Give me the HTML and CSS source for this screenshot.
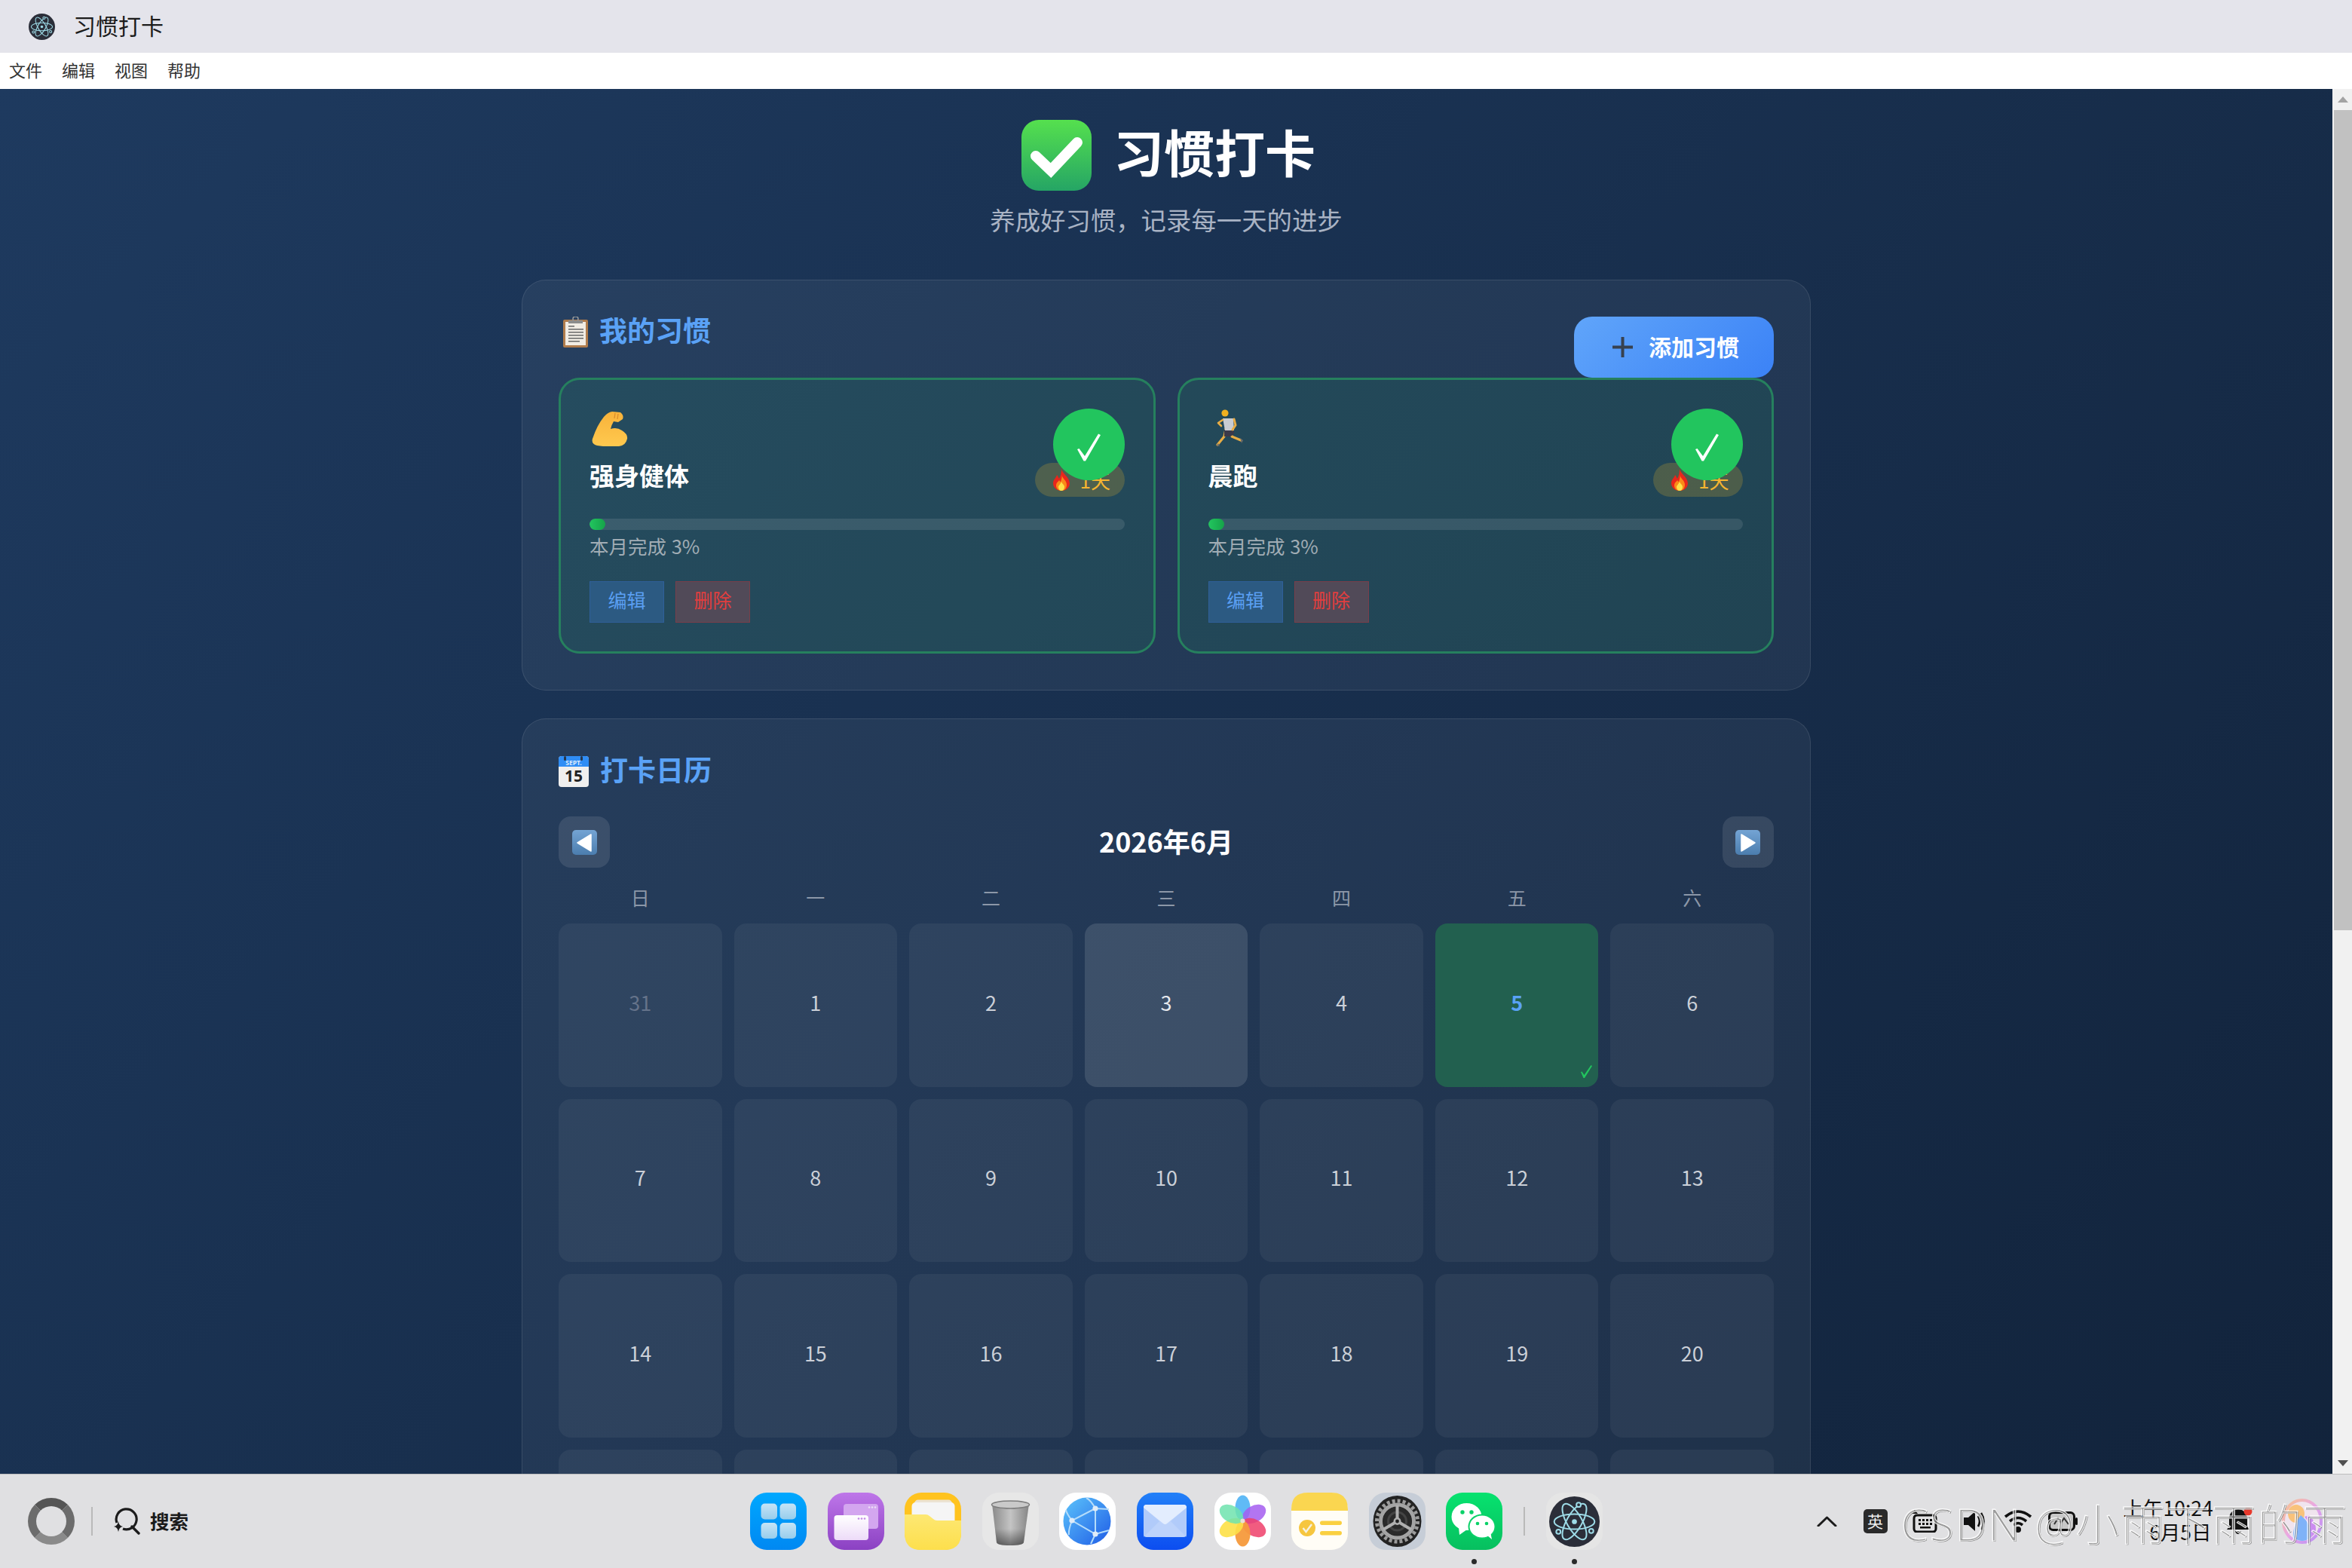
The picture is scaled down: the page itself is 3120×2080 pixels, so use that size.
FILE: index.html
```html
<!DOCTYPE html>
<html lang="zh-CN">
<head>
<meta charset="utf-8">
<title>习惯打卡</title>
<link rel="stylesheet" href="styles.css">
</head>
<body>
<svg class="defs" aria-hidden="true">
  <defs>
    <linearGradient id="gCheck" x1="0" y1="0" x2="0" y2="1"><stop offset="0" stop-color="#55e04e"/><stop offset="1" stop-color="#25a565"/></linearGradient>
    <linearGradient id="gArm" x1="0" y1="0" x2="0" y2="1"><stop offset="0" stop-color="#f8b23a"/><stop offset="1" stop-color="#ffc94f"/></linearGradient>
    <linearGradient id="gNav" x1="0" y1="0" x2="0" y2="1"><stop offset="0" stop-color="#74a4d4"/><stop offset="1" stop-color="#4b7dae"/></linearGradient>
    <linearGradient id="gBlue" x1="0" y1="0" x2="0" y2="1"><stop offset="0" stop-color="#00a8ff"/><stop offset="1" stop-color="#0088f2"/></linearGradient>
    <linearGradient id="gTile" x1="0" y1="0" x2="0" y2="1"><stop offset="0" stop-color="#c6e4f6"/><stop offset="1" stop-color="#97cdec"/></linearGradient>
    <linearGradient id="gPurple" x1="0" y1="0" x2="0" y2="1"><stop offset="0" stop-color="#be76e9"/><stop offset="1" stop-color="#8b41c3"/></linearGradient>
    <linearGradient id="gWin" x1="0" y1="0" x2="0" y2="1"><stop offset="0" stop-color="#ffffff"/><stop offset="1" stop-color="#eddbf8"/></linearGradient>
    <linearGradient id="gFolder" x1="0" y1="0" x2="0" y2="1"><stop offset="0" stop-color="#fde873"/><stop offset="1" stop-color="#fddf4c"/></linearGradient>
    <linearGradient id="gBin" x1="0" y1="0" x2="1" y2="0"><stop offset="0" stop-color="#8a8a8a"/><stop offset=".5" stop-color="#c4c4c4"/><stop offset="1" stop-color="#858585"/></linearGradient>
    <linearGradient id="gBinV" x1="0" y1="0" x2="0" y2="1"><stop offset=".6" stop-color="#000" stop-opacity="0"/><stop offset="1" stop-color="#000" stop-opacity=".45"/></linearGradient>
    <linearGradient id="gGlobe" x1="0" y1="0" x2="1" y2="1"><stop offset="0" stop-color="#5cc4fb"/><stop offset="1" stop-color="#1f5ce6"/></linearGradient>
    <linearGradient id="gMail" x1="0" y1="0" x2="0" y2="1"><stop offset="0" stop-color="#2280f8"/><stop offset="1" stop-color="#0c4df0"/></linearGradient>
    <linearGradient id="gGreen" x1="0" y1="0" x2="0" y2="1"><stop offset="0" stop-color="#07e26f"/><stop offset="1" stop-color="#07bf5f"/></linearGradient>
    <linearGradient id="gOrb" x1="0" y1="0" x2="1" y2="1"><stop offset="0" stop-color="#f8c48a"/><stop offset=".5" stop-color="#e8a6e8"/><stop offset="1" stop-color="#b78bf5"/></linearGradient>

    <symbol id="atom" viewBox="0 0 60 60">
      <circle cx="30" cy="30" r="30" fill="#2b2e39"/>
      <g fill="none" stroke="#9edce8" stroke-width="1.800">
        <ellipse cx="30" cy="30" rx="24" ry="9"/>
        <ellipse cx="30" cy="30" rx="24" ry="9" transform="rotate(60 30 30)"/>
        <ellipse cx="30" cy="30" rx="24" ry="9" transform="rotate(120 30 30)"/>
      </g>
      <circle cx="30" cy="30" r="3" fill="#9edce8"/>
      <g fill="#2b2e39" stroke="#9edce8" stroke-width="1.800">
        <circle cx="35" cy="10" r="2.600"/><circle cx="11" cy="42" r="2.600"/><circle cx="50" cy="41" r="2.600"/>
      </g>
    </symbol>
    <symbol id="fire" viewBox="0 0 24 29">
      <path d="M12 0C13 6 22 10 23 19C23 25 18 29 12 29C6 29 1 25 1 19C1 14 5 12 6 8C8 10 8 12 9 13C11 9 12 5 12 0Z" fill="#e8261c"/>
      <path d="M12.500 8C13 13 19 15 19 21C19 26 16 29 12 29C8 29 5 26 5 22C5 18 8 17 9 15C10 16 10 17 11 17C12 14 13 11 12.500 8Z" fill="#fa8a18"/>
      <path d="M12 17C13 20 16 21 16 24C16 27 14 29 12 29C10 29 8 27 8 24C8 22 11 20 12 17Z" fill="#fde24a"/>
    </symbol>
    <symbol id="tick" viewBox="0 0 95 95">
      <path d="M32 54L34.500 53L42 63L60 33.500L63 35L43 69.500L40.500 69.500Z" fill="#fff"/>
    </symbol>
  </defs>
</svg>

<div class="window">
  <header class="titlebar">
    <svg class="title-icon" viewBox="0 0 60 60"><use href="#atom"/></svg>
    <span class="title-text">习惯打卡</span>
  </header>
  <nav class="menubar">
    <span>文件</span><span>编辑</span><span>视图</span><span>帮助</span>
  </nav>

  <div class="main">
    <div class="viewport">
      <div class="page">
        <div class="hero">
          <div class="hero-row">
            <svg class="hero-icon" viewBox="0 0 93 94">
              <rect width="93" height="94" rx="23" fill="url(#gCheck)"/>
              <path d="M19 48L39 67L74 30" fill="none" stroke="#fff" stroke-width="14" stroke-linecap="round" stroke-linejoin="miter"/>
            </svg>
            <h1 class="hero-title">习惯打卡</h1>
          </div>
          <p class="hero-sub">养成好习惯，记录每一天的进步</p>
        </div>

        <section class="panel panel-habits">
          <div class="panel-head">
            <h2 class="panel-title">
              <svg class="emoji-clip" viewBox="0 0 33 41">
                <rect x="0" y="4" width="33" height="37" rx="2" fill="#b07c4c"/>
                <rect x="3" y="7" width="27" height="31" fill="#f1ece4"/>
                <rect x="13" y="0" width="7" height="6" rx="3" fill="none" stroke="#9a9a9a" stroke-width="1.500"/>
                <rect x="7" y="5" width="19" height="4" fill="#8c8c8c"/>
                <g fill="#666"><rect x="7" y="12" width="8" height="1.500"/><rect x="7" y="16" width="20" height="1.500"/><rect x="7" y="20" width="20" height="1.500"/><rect x="7" y="24" width="20" height="1.500"/><rect x="7" y="28" width="20" height="1.500"/><rect x="7" y="32" width="15" height="1.500"/></g>
              </svg>
              <span class="panel-title-text">我的习惯</span>
            </h2>
            <button class="add-btn">
              <svg class="plus" viewBox="0 0 27 27"><path d="M11.500 0h4v11.500H27v4H15.500V27h-4V15.500H0v-4h11.500z" fill="#37414f"/></svg>
              <span class="add-text">添加习惯</span>
            </button>
          </div>
          <div class="habits">
            <article class="habit">
              <div class="done-badge"><svg class="tick" viewBox="0 0 95 95"><use href="#tick"/></svg></div>
              <div class="habit-top">
                <div class="habit-id">
                  <div class="habit-emoji">
                    <svg class="emoji-arm" viewBox="0 0 48 46">
                      <path d="M27 0L38 1Q43 5 41 10L35 14L29 13Q26 18 25 23Q33 20 40 25Q48 30 47 36Q45 45 36 46Q18 47 7 45Q-1 43 1 36Q7 18 16 7Q21 1 27 0Z" fill="url(#gArm)"/>
                      <path d="M31 2l-1 7M35 3l-1 7" stroke="#d98a2b" stroke-width="1.200"/>
                    </svg>
                  </div>
                  <div class="habit-name">强身健体</div>
                </div>
                <div class="streak"><svg class="fire" viewBox="0 0 24 29"><use href="#fire"/></svg><span>1天</span></div>
              </div>
              <div class="bar"><div class="bar-fill"></div></div>
              <div class="bar-text">本月完成 3%</div>
              <div class="actions"><button class="btn-edit">编辑</button><button class="btn-del">删除</button></div>
            </article>

            <article class="habit">
              <div class="done-badge"><svg class="tick" viewBox="0 0 95 95"><use href="#tick"/></svg></div>
              <div class="habit-top">
                <div class="habit-id">
                  <div class="habit-emoji runner-wrap">
                    <svg class="emoji-run" viewBox="0 0 41 50">
                      <path d="M16 26L14 36L5 47" fill="none" stroke="#e8ad45" stroke-width="3.200" stroke-linecap="round" stroke-linejoin="round"/>
                      <path d="M22 26L24 36L36 41" fill="none" stroke="#e8ad45" stroke-width="3.200" stroke-linecap="round" stroke-linejoin="round"/>
                      <path d="M4 48l4 1-2-4zM35 38l4 3-2 4z" fill="#6b6b6b"/>
                      <path d="M14 27L27 27L27 33L22 36L14 36Z" fill="#3a3a4a"/>
                      <path d="M12 12L26 12L27 28L15 28Z" fill="#c9ccd2"/>
                      <path d="M12 14L6 18L10 22" fill="none" stroke="#e8ad45" stroke-width="2.600" stroke-linecap="round" stroke-linejoin="round"/>
                      <path d="M27 13L29 21L25 27" fill="none" stroke="#e8ad45" stroke-width="3" stroke-linecap="round" stroke-linejoin="round"/>
                      <circle cx="15" cy="5" r="4.600" fill="#f0b020"/>
                    </svg>
                  </div>
                  <div class="habit-name">晨跑</div>
                </div>
                <div class="streak"><svg class="fire" viewBox="0 0 24 29"><use href="#fire"/></svg><span>1天</span></div>
              </div>
              <div class="bar"><div class="bar-fill"></div></div>
              <div class="bar-text">本月完成 3%</div>
              <div class="actions"><button class="btn-edit">编辑</button><button class="btn-del">删除</button></div>
            </article>
          </div>
        </section>

        <section class="panel">
          <h2 class="panel-title cal-title">
            <svg class="emoji-cal" viewBox="0 0 40 41">
              <rect width="40" height="41" rx="4" fill="#f0efee"/>
              <path d="M0 14V4a4 4 0 0 1 4-4h32a4 4 0 0 1 4 4v10z" fill="#2f8df5"/>
              <rect x="7" y="0" width="3" height="6" rx="1.500" fill="#27364a"/><rect x="29" y="0" width="3" height="6" rx="1.500" fill="#27364a"/>
              <text x="20" y="12" text-anchor="middle" class="cal-mon">SEPT.</text>
              <text x="20" y="33.500" text-anchor="middle" class="cal-day">15</text>
            </svg>
            <span class="panel-title-text">打卡日历</span>
          </h2>
          <div class="month-row">
            <button class="nav-btn">
              <svg class="nav-arrow" viewBox="0 0 33 33"><rect width="33" height="33" rx="5" fill="url(#gNav)"/><path d="M7 17L25 6V28Z" fill="#fff" stroke="#fff" stroke-linejoin="round" stroke-width="1.500"/></svg>
            </button>
            <div class="month-name">2026年6月</div>
            <button class="nav-btn">
              <svg class="nav-arrow" viewBox="0 0 33 33"><rect width="33" height="33" rx="5" fill="url(#gNav)"/><path d="M26 17L8 6V28Z" fill="#fff" stroke="#fff" stroke-linejoin="round" stroke-width="1.500"/></svg>
            </button>
          </div>
          <div class="week"><span>日</span><span>一</span><span>二</span><span>三</span><span>四</span><span>五</span><span>六</span></div>
          <div class="cal-grid">
            <div class="day other">31</div><div class="day">1</div><div class="day">2</div><div class="day today">3</div><div class="day">4</div>
            <div class="day checked">5<svg class="day-tick" viewBox="0 0 15 17"><path d="M0 9L1.500 8.500L4.500 13L13.500 0L15 1L5 17L3.500 17Z" fill="#22c55e"/></svg></div><div class="day">6</div>
            <div class="day">7</div><div class="day">8</div><div class="day">9</div><div class="day">10</div><div class="day">11</div><div class="day">12</div><div class="day">13</div>
            <div class="day">14</div><div class="day">15</div><div class="day">16</div><div class="day">17</div><div class="day">18</div><div class="day">19</div><div class="day">20</div>
            <div class="day"></div><div class="day"></div><div class="day"></div><div class="day"></div><div class="day"></div><div class="day"></div><div class="day"></div>
          </div>
        </section>
      </div>
    </div>
    <aside class="scrollbar">
      <div class="sb-btn"><svg class="sb-arrow" viewBox="0 0 14 8"><path d="M7 0L14 8H0Z" fill="#a3a3a3"/></svg></div>
      <div class="sb-track"><div class="sb-thumb"></div></div>
      <div class="sb-btn"><svg class="sb-arrow" viewBox="0 0 14 8"><path d="M7 8L14 0H0Z" fill="#505050"/></svg></div>
    </aside>
  </div>

  <footer class="taskbar">
    <div class="start-ring"></div>
    <div class="tb-sep"></div>
    <svg class="search-icon" viewBox="0 0 36 36">
      <path d="M5 20A13.500 13.500 0 1 1 13 28" fill="none" stroke="#1c1c1c" stroke-width="3.200"/>
      <path d="M25 25L34 34" stroke="#1c1c1c" stroke-width="3.400" stroke-linecap="round"/>
      <path d="M7 18Q7.800 24 13 25Q7.800 26 7 32Q6.200 26 1 25Q6.200 24 7 18Z" fill="#1c1c1c"/>
    </svg>
    <span class="search-text">搜索</span>

    <div class="dock">
      <div class="dock-item"><svg class="dock-icon" viewBox="0 0 75 76">
        <rect width="75" height="76" rx="22" fill="url(#gBlue)"/>
        <rect x="14.500" y="14.500" width="21.500" height="21" rx="5" fill="url(#gTile)"/><rect x="39.500" y="14.500" width="21.500" height="21" rx="5" fill="url(#gTile)"/>
        <rect x="14.500" y="40" width="21.500" height="21" rx="5" fill="url(#gTile)"/><rect x="39.500" y="40" width="21.500" height="21" rx="5" fill="url(#gTile)"/>
      </svg></div>
      <div class="dock-item"><svg class="dock-icon" viewBox="0 0 75 76">
        <rect width="75" height="76" rx="22" fill="url(#gPurple)"/>
        <rect x="21" y="15" width="46" height="33" rx="4" fill="#d3a6ef"/>
        <rect x="8.500" y="30" width="45.500" height="33" rx="4" fill="url(#gWin)"/>
        <g fill="#c48ae6"><circle cx="41" cy="34.500" r="1.300"/><circle cx="45" cy="34.500" r="1.300"/><circle cx="49" cy="34.500" r="1.300"/></g>
        <g fill="#eedcf8"><circle cx="55" cy="19.500" r="1.300"/><circle cx="59" cy="19.500" r="1.300"/><circle cx="63" cy="19.500" r="1.300"/></g>
      </svg></div>
      <div class="dock-item"><svg class="dock-icon" viewBox="0 0 75 76">
        <rect width="75" height="76" rx="22" fill="#ffc31f"/>
        <rect x="13" y="9.500" width="50" height="30" rx="5" fill="#ece3d2"/>
        <rect x="9.500" y="13" width="57" height="36" rx="5" fill="#f5f5f5"/>
        <path d="M0 29H28Q31 29 33 31L38 35Q40 37 43 37H75V54Q75 76 53 76H22Q0 76 0 54Z" fill="url(#gFolder)"/>
      </svg></div>
      <div class="dock-item"><svg class="dock-icon" viewBox="0 0 75 76">
        <rect width="75" height="76" rx="22" fill="#e7e7e7"/>
        <path d="M13 15L19 66Q20 70 37 70Q54 70 55 66L62 15Z" fill="url(#gBin)"/>
        <path d="M13 15L19 66Q20 70 37 70Q54 70 55 66L62 15Z" fill="url(#gBinV)"/>
        <ellipse cx="37.500" cy="16" rx="25" ry="5" fill="#c9c9c9" stroke="#7d7d7d" stroke-width="1.500"/>
      </svg></div>
      <div class="dock-item"><svg class="dock-icon" viewBox="0 0 75 76">
        <rect width="75" height="76" rx="22" fill="#fff"/>
        <circle cx="37" cy="38" r="31.500" fill="url(#gGlobe)"/>
        <g fill="none" stroke="#b4dcfa" stroke-width="2">
          <path d="M48 21L17 37L48 55Z"/><path d="M48 21Q42 10 36 7M48 21L66 22M17 37Q10 28 9 23M17 37Q12 50 13 56M48 55L42 68M48 55L66 50"/>
        </g>
        <g fill="#e0ecf8"><circle cx="48" cy="21" r="3.600"/><circle cx="17" cy="37" r="3.600"/><circle cx="48" cy="55" r="3.600"/></g>
      </svg></div>
      <div class="dock-item"><svg class="dock-icon" viewBox="0 0 75 76">
        <rect width="75" height="76" rx="22" fill="url(#gMail)"/>
        <rect x="9" y="16" width="57" height="43" rx="4" fill="#bdd3fb"/>
        <path d="M9 20Q9 16 13 16H62Q66 16 66 20L40 41Q37.500 43 35 41Z" fill="#e3edfe"/>
        <path d="M9 59L30 38L9 20ZM66 59L45 38L66 20Z" fill="#a9c6fa" opacity=".6"/>
      </svg></div>
      <div class="dock-item"><svg class="dock-icon" viewBox="0 0 75 76">
        <rect width="75" height="76" rx="22" fill="#fff"/>
        <g transform="translate(37.500 37.500)">
          <ellipse cx="0" cy="-17" rx="10" ry="17" fill="#4fb2f5" opacity=".9"/>
          <ellipse cx="15" cy="-9" rx="11" ry="17" transform="rotate(60 15 -9)" fill="#a45df0" opacity=".85"/>
          <ellipse cx="15" cy="9" rx="11" ry="17" transform="rotate(120 15 9)" fill="#ee3f6a" opacity=".85"/>
          <ellipse cx="0" cy="17" rx="10" ry="17" fill="#f59a3c" opacity=".95"/>
          <ellipse cx="-15" cy="9" rx="11" ry="17" transform="rotate(-120 -15 9)" fill="#fde047" opacity=".9"/>
          <ellipse cx="-15" cy="-9" rx="11" ry="17" transform="rotate(-60 -15 -9)" fill="#6fe3ae" opacity=".85"/>
          <circle r="3" fill="#e8e0d8"/>
        </g>
      </svg></div>
      <div class="dock-item"><svg class="dock-icon" viewBox="0 0 75 76">
        <rect width="75" height="76" rx="22" fill="#fffdf6"/>
        <path d="M0 24V22Q0 0 22 0H53Q75 0 75 22V24Z" fill="#fad650"/>
        <circle cx="21" cy="47" r="11" fill="#f6c63f"/>
        <path d="M15.500 47L19.500 52L27 42" fill="none" stroke="#f5f1e2" stroke-width="2.400"/>
        <rect x="38" y="37.500" width="29" height="5.500" rx="2.700" fill="#fad040"/><rect x="38" y="51" width="29" height="5.500" rx="2.700" fill="#fad040"/>
      </svg></div>
      <div class="dock-item"><svg class="dock-icon" viewBox="0 0 75 76">
        <rect width="75" height="76" rx="22" fill="#c6cdd7"/>
        <ellipse cx="37.500" cy="38" rx="32" ry="34" fill="#232323"/>
        <circle cx="37.500" cy="38" r="27" fill="none" stroke="#9c9c9c" stroke-width="5" stroke-dasharray="4 3.050"/>
        <circle cx="37.500" cy="38" r="22" fill="none" stroke="#a4a4a4" stroke-width="5"/>
        <circle cx="37.500" cy="38" r="19" fill="#2a2a2a"/>
        <circle cx="37.500" cy="38" r="12" fill="none" stroke="#444" stroke-width="3"/>
        <g stroke="#b0b0b0" stroke-width="4"><path d="M37.500 38V17M37.500 38L19 49M37.500 38L56 49"/></g>
        <circle cx="37.500" cy="38" r="5" fill="#b0b0b0"/><circle cx="37.500" cy="38" r="2.400" fill="#222"/>
      </svg></div>
      <div class="dock-item running"><svg class="dock-icon" viewBox="0 0 75 76">
        <rect width="75" height="76" rx="22" fill="url(#gGreen)"/>
        <ellipse cx="27.500" cy="32" rx="20" ry="18" fill="#fff"/>
        <path d="M17 46L18 56L28 49Z" fill="#fff"/>
        <ellipse cx="48" cy="45" rx="18.500" ry="16.500" fill="#0ad168"/>
        <ellipse cx="48" cy="45" rx="16.500" ry="14.500" fill="#fff"/>
        <path d="M54 56L61 62L59 52Z" fill="#fff"/>
        <g fill="#0ad168"><circle cx="22" cy="26" r="2.700"/><circle cx="34" cy="26" r="2.700"/></g>
        <g fill="#0ad168"><circle cx="42" cy="41" r="2.300"/><circle cx="54" cy="41" r="2.300"/></g>
      </svg></div>
      <div class="dock-sep"></div>
      <div class="dock-item running"><svg class="dock-icon" viewBox="0 0 75 76">
        <rect width="75" height="76" rx="22" fill="#e5e5e5"/>
        <svg x="4" y="5" width="67" height="67" viewBox="0 0 60 60"><use href="#atom"/></svg>
      </svg></div>
    </div>

    <div class="tray">
      <svg class="t-chev" viewBox="0 0 27 14"><path d="M2 13L13.500 2L25 13" fill="none" stroke="#1c1c1c" stroke-width="3" stroke-linecap="round" stroke-linejoin="round"/></svg>
      <div class="t-ime">英</div>
      <svg class="t-kbd" viewBox="0 0 37 30">
        <rect x="5" y="7" width="29" height="22" rx="4" fill="none" stroke="#111" stroke-width="3"/>
        <g fill="#111"><rect x="11" y="12" width="3" height="3"/><rect x="16" y="12" width="3" height="3"/><rect x="21" y="12" width="3" height="3"/><rect x="26" y="12" width="3" height="3"/><rect x="11" y="17" width="3" height="3"/><rect x="16" y="17" width="3" height="3"/><rect x="21" y="17" width="3" height="3"/><rect x="26" y="17" width="3" height="3"/><rect x="13" y="22" width="14" height="2.500"/></g>
        <path d="M6 0L10 5H2Z" fill="#111"/>
      </svg>
      <svg class="t-spk" viewBox="0 0 31 30">
        <path d="M0 10H6L15 2V28L6 20H0Z" fill="#111"/>
        <path d="M19 8Q23 15 19 22M23 4Q30 15 23 26" fill="none" stroke="#111" stroke-width="2.600"/>
      </svg>
      <svg class="t-wifi" viewBox="0 0 38 32">
        <path d="M2 10Q19 -4 36 10M8 16Q19 7 30 16M13 21Q19 16 25 21" fill="none" stroke="#111" stroke-width="3.600"/>
        <circle cx="19" cy="27" r="4" fill="#111"/>
      </svg>
      <svg class="t-bat" viewBox="0 0 39 26">
        <rect x="1.500" y="1.500" width="33" height="23" rx="5" fill="#c8c8c8" stroke="#111" stroke-width="3"/>
        <rect x="36" y="8" width="3" height="10" rx="1.500" fill="#111"/>
        <path d="M8 17L13 9L17 15L21 9L27 17" fill="none" stroke="#333" stroke-width="2"/>
      </svg>
      <div class="clock"><div>上午10:24</div><div>6月5日</div></div>
      <svg class="t-bell" viewBox="0 0 34 36">
        <path d="M15 2Q27 3 27 16V25L30 29H0L3 25V16Q3 3 15 2Z" fill="#111"/>
        <path d="M11 31H19Q18 35 15 35Q12 35 11 31Z" fill="#111"/>
        <circle cx="28" cy="5" r="5.500" fill="#e8392c"/>
      </svg>
      <svg class="t-orb" viewBox="0 0 54 60">
        <ellipse cx="27" cy="30" rx="25" ry="28" fill="#f0e4ee" stroke="url(#gOrb)" stroke-width="4"/>
        <ellipse cx="19" cy="20" rx="11" ry="12" fill="#f9c27a"/>
        <path d="M25 22Q42 36 38 52Q27 60 15 52Q14 36 25 22Z" fill="#7fb2f8"/>
        <path d="M36 22Q48 34 44 46L38 52Q40 36 30 24Z" fill="#cc8cf0"/>
      </svg>
    </div>
    <div class="watermark">CSDN @小雨下雨的雨</div>
  </footer>
</div>
</body>
</html>
```

FILE: styles.css
```css
* { box-sizing: border-box; }
html, body { margin: 0; padding: 0; }
body {
  width: 3120px;
  height: 2080px;
  overflow: hidden;
  font-family: "Noto Sans CJK SC", "Noto Sans", sans-serif;
}
.defs { position: absolute; width: 0; height: 0; }
button { font-family: inherit; cursor: pointer; }

.window { display: flex; flex-direction: column; width: 3120px; height: 2080px; }

.titlebar {
  height: 70px;
  flex: none;
  background: #e4e4eb;
  display: flex;
  align-items: center;
  padding-left: 38px;
  gap: 24px;
}
.title-icon { width: 35px; height: 35px; }
.title-text { font-size: 30px; line-height: 38px; padding-bottom: 4px; color: #1c1c1c; }

.menubar {
  height: 48px;
  flex: none;
  background: #fff;
  display: flex;
  align-items: center;
  padding-left: 12px;
  padding-bottom: 4px;
  gap: 26px;
  font-size: 22px;
  color: #333;
}

.main { flex: 1; min-height: 0; display: flex; }
.viewport { width: 3094px; overflow: hidden; }
.page {
  min-height: 3010px;
  padding-top: 41px;
  background: linear-gradient(135deg, #1e3a5f 0%, #0f1e33 100%);
}

.hero { text-align: center; margin-bottom: 58px; }
.hero-row { display: flex; justify-content: center; align-items: flex-start; gap: 29px; height: 94px; padding-left: 6px; }
.hero-icon { width: 93px; height: 94px; }
.hero-title { margin: 0; font-size: 67px; font-weight: 700; color: #fff; line-height: 82px; }
.hero-sub { margin: 16px 0 0; font-size: 33.400px; line-height: 44px; color: #a9b3c4; }

.panel {
  width: 1710px;
  margin: 0 auto 37px;
  padding: 48px;
  background: rgba(255, 255, 255, 0.05);
  border: 1px solid rgba(255, 255, 255, 0.1);
  border-radius: 32px;
}
.panel-head { display: flex; justify-content: space-between; align-items: flex-start; height: 81px; }
.panel-title {
  margin: 0;
  display: flex;
  align-items: center;
  gap: 15px;
  height: 40px;
  padding-left: 6px;
  font-size: 37px;
  font-weight: 700;
  color: #5aa2f6;
}
.panel-title-text { line-height: 44px; padding-bottom: 6px; }
.emoji-clip { width: 33px; height: 41px; flex: none; }
.emoji-cal { width: 40px; height: 41px; margin-left: -4px; flex: none; }
.cal-mon { font-size: 8.500px; fill: #dbe9fb; font-family: "Noto Sans", sans-serif; }
.cal-day { font-size: 21px; fill: #222; font-family: "Noto Sans", sans-serif; }

.add-btn {
  display: flex;
  align-items: center;
  gap: 21px;
  width: 265px;
  height: 81px;
  padding: 0 0 0 51px;
  border: none;
  border-radius: 24px;
  background: linear-gradient(135deg, #60a5fa, #3b82f6);
  color: #fff;
  font-size: 30px;
  font-weight: 700;
}
.add-text { line-height: 40px; padding-bottom: 4px; }
.plus { width: 27px; height: 27px; flex: none; }

.habits { display: grid; grid-template-columns: 1fr 1fr; gap: 29px; }
.habit {
  position: relative;
  height: 366px;
  padding: 38px;
  border: 3px solid #26805e;
  border-radius: 28px;
  background: rgba(34, 197, 94, 0.1);
}
.done-badge {
  position: absolute;
  top: 38px;
  right: 38px;
  width: 95px;
  height: 95px;
  border-radius: 50%;
  background: #22c55e;
}
.tick { display: block; width: 95px; height: 95px; }
.habit-top { display: flex; justify-content: space-between; align-items: flex-end; height: 117px; }
.habit-id { display: flex; flex-direction: column; }
.habit-emoji { height: 68px; padding: 4px 0 0 3px; }
.runner-wrap { padding: 1px 0 0 7px; }
.emoji-arm { display: block; width: 48px; height: 46px; }
.emoji-run { display: block; width: 41px; height: 50px; }
.habit-name { height: 49px; line-height: 40px; font-size: 33px; font-weight: 700; color: #fff; }
.streak {
  display: flex;
  align-items: center;
  gap: 13px;
  height: 45px;
  width: 119px;
  padding-left: 23px;
  border-radius: 23px;
  background: rgba(251, 191, 36, 0.2);
  color: #f6b530;
  font-size: 26px;
}
.fire { width: 24px; height: 29px; flex: none; }
.bar { margin-top: 29px; height: 15px; border-radius: 8px; background: rgba(255, 255, 255, 0.1); overflow: hidden; }
.bar-fill { width: 3%; height: 100%; border-radius: 8px; background: linear-gradient(90deg, #22c55e, #16a34a); }
.bar-text { margin-top: 5px; line-height: 31px; font-size: 25.500px; word-spacing: 1px; color: #a1adb5; }
.actions { display: flex; gap: 15px; margin-top: 32px; }
.actions button { width: 99px; height: 55px; padding: 0 0 7px; font-size: 25px; line-height: 34px; border-radius: 0; }
.btn-edit { background: #2c5a82; border: 1px solid #2f5f99; color: #5a9ff2; }
.btn-del { background: #514a58; border: 1px solid #7a3e4a; color: #e23e3e; }

.cal-title { margin-top: 1px; padding-left: 4px; margin-bottom: 40px; }
.month-row { display: flex; justify-content: space-between; align-items: center; height: 68px; }
.nav-btn {
  display: flex;
  align-items: center;
  justify-content: center;
  width: 68px;
  height: 68px;
  padding: 0;
  border: none;
  border-radius: 16px;
  background: rgba(255, 255, 255, 0.1);
}
.nav-arrow { width: 33px; height: 33px; }
.month-name { font-size: 36px; font-weight: 700; line-height: 48px; padding-bottom: 5px; color: #fff; }
.week {
  display: grid;
  grid-template-columns: repeat(7, 1fr);
  gap: 16px;
  margin-top: 24px;
  margin-bottom: 14px;
  height: 36px;
  line-height: 31px;
  text-align: center;
  font-size: 25px;
  color: #8c97a8;
}
.cal-grid { display: grid; grid-template-columns: repeat(7, 1fr); gap: 16px; }
.day {
  position: relative;
  aspect-ratio: 1;
  display: flex;
  align-items: center;
  justify-content: center;
  padding-bottom: 8px;
  border-radius: 16px;
  background: rgba(255, 255, 255, 0.05);
  font-size: 27px;
  color: #cbd0d8;
}
.day.other { color: #65738a; }
.day.today { background: rgba(255, 255, 255, 0.12); color: #e6e9ee; }
.day.checked { background: #22604f; color: #5aa2f6; font-weight: 700; }
.day-tick { position: absolute; right: 8px; bottom: 12px; width: 15px; height: 17px; }

.scrollbar { width: 26px; flex: none; display: flex; flex-direction: column; background: #f1f1f1; }
.sb-btn { height: 28px; flex: none; display: flex; align-items: center; justify-content: center; padding-left: 2px; }
.sb-arrow { width: 14px; height: 8px; }
.sb-track { flex: 1; padding-left: 2px; }
.sb-thumb { height: 1088px; background: #c1c1c1; }

.taskbar {
  position: relative;
  height: 125px;
  flex: none;
  display: flex;
  align-items: center;
  padding-left: 37px;
  background: #e0e0e2;
  border-top: 1px solid #bdbdbd;
}
.start-ring {
  width: 62px;
  height: 62px;
  border-radius: 50%;
  border: 11px solid #6c6c6c;
  border-top-color: #555;
  border-bottom-color: #8a8a8a;
}
.tb-sep { width: 2px; height: 38px; margin-left: 22px; background: #b9b9b9; }
.search-icon { width: 36px; height: 36px; margin-left: 27px; }
.search-text { margin-left: 13px; padding-bottom: 3px; font-size: 25.500px; font-weight: 700; color: #1a1a1a; }

.dock { display: flex; align-items: center; gap: 27.600px; margin-left: 745px; }
.dock-item { position: relative; width: 75px; height: 76px; }
.dock-icon { display: block; width: 75px; height: 76px; }
.dock-sep { width: 2px; height: 38px; background: #b9b9b9; }
.running::after {
  content: "";
  position: absolute;
  left: 34px;
  bottom: -19px;
  width: 7px;
  height: 7px;
  border-radius: 50%;
  background: #2a2a2a;
}

.tray { display: flex; align-items: center; margin-left: 284px; }
.t-chev { width: 27px; height: 14px; }
.t-ime {
  width: 32px;
  height: 32px;
  margin-left: 35px;
  border-radius: 5px;
  background: #2a2a2a;
  color: #f0f0f0;
  font-size: 21px;
  line-height: 30px;
  text-align: center;
}
.t-kbd { width: 37px; height: 30px; margin-left: 30px; }
.t-spk { width: 31px; height: 30px; margin-left: 34px; }
.t-wifi { width: 38px; height: 32px; margin-left: 22px; }
.t-bat { width: 39px; height: 26px; margin-left: 21px; }
.clock { width: 117px; margin-left: 61px; padding-bottom: 4px; text-align: right; font-size: 26.500px; line-height: 32px; white-space: nowrap; color: #111; }
.t-bell { width: 34px; height: 36px; margin-left: 20px; }
.t-orb { width: 54px; height: 60px; margin-left: 39px; }

.watermark {
  position: absolute;
  right: 5px;
  top: 26px;
  white-space: nowrap;
  font-family: "Noto Sans", "Noto Sans CJK SC", sans-serif;
  font-size: 58px;
  font-weight: 300;
  letter-spacing: 2.300px;
  line-height: 80px;
  color: rgba(255, 255, 255, 0.2);
  -webkit-text-stroke: 1px rgba(255, 255, 255, 0.9);
  text-shadow: 1px 1px 0 rgba(90, 90, 90, 0.7);
}
```
